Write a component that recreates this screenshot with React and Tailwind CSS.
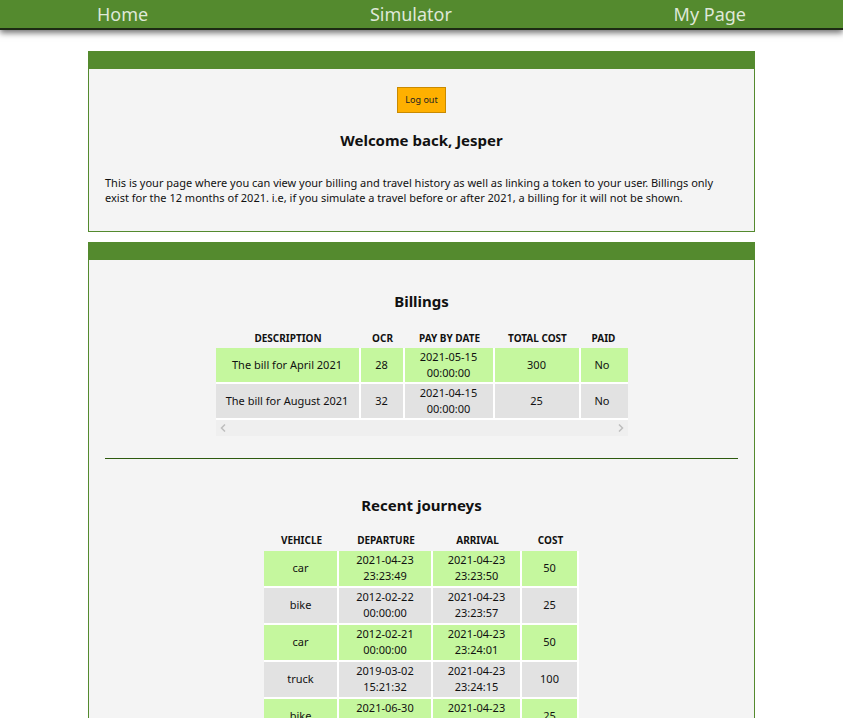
const billings = [
  { desc: "The bill for April 2021", ocr: "28", date: "2021-05-15", time: "00:00:00", cost: "300", paid: "No" },
  { desc: "The bill for August 2021", ocr: "32", date: "2021-04-15", time: "00:00:00", cost: "25", paid: "No" },
];

const journeys = [
  { vehicle: "car", dep: ["2021-04-23", "23:23:49"], arr: ["2021-04-23", "23:23:50"], cost: "50" },
  { vehicle: "bike", dep: ["2012-02-22", "00:00:00"], arr: ["2021-04-23", "23:23:57"], cost: "25" },
  { vehicle: "car", dep: ["2012-02-21", "00:00:00"], arr: ["2021-04-23", "23:24:01"], cost: "50" },
  { vehicle: "truck", dep: ["2019-03-02", "15:21:32"], arr: ["2021-04-23", "23:24:15"], cost: "100" },
  { vehicle: "bike", dep: ["2021-06-30", "00:00:00"], arr: ["2021-04-23", "23:24:20"], cost: "25" },
];

const cell = "border-r-2 border-b-2 border-white text-center align-middle leading-[16px]";

function Card({ children }) {
  return (
    <div className="border border-[#548a2e] bg-[#f4f4f4]">
      <div className="h-[17px] bg-[#548a2e]" />
      {children}
    </div>
  );
}

export default function App() {
  return (
    <div className="min-h-[718px] bg-white text-[#111] font-['Noto_Sans','Open_Sans',sans-serif]">
      <nav className="relative h-[30px] bg-[#548a2e] flex items-center justify-between px-[97px] text-[18px] leading-none text-[#dfe8d8] shadow-[0_3px_6px_rgba(0,0,0,0.55)] border-b-2 border-[#1d2a14]">
        <span>Home</span>
        <span>Simulator</span>
        <span>My Page</span>
      </nav>

      <main className="w-[667px] mx-auto pt-[21px] flex flex-col gap-[10px]">
        <Card>
          <div className="px-4 pt-[18px] pb-[26px] text-[11px]">
            <div className="flex justify-center">
              <button className="h-[26px] px-[7px] bg-[#ffb000] border border-[#c98a00] text-[9px] text-[#222]">
                Log out
              </button>
            </div>
            <h2 className="text-center text-[15px] font-bold mt-[16px]">Welcome back, Jesper</h2>
            <p className="mt-[23px] leading-[15px] text-[11px]">
              This is your page where you can view your billing and travel history as well as linking a token to your user. Billings only exist for the 12 months of 2021. i.e, if you simulate a travel before or after 2021, a billing for it will not be shown.
            </p>
          </div>
        </Card>

        <Card>
          <div className="px-4 pt-[30px] pb-[40px] text-[11px]">
            <h2 className="text-center text-[15px] font-bold">Billings</h2>
            <div className="mx-auto mt-[16px] w-[412px]">
              <div className="overflow-hidden">
                <table className="border-separate border-spacing-0 w-[460px] table-fixed">
                  <colgroup>
                    <col className="w-[145px]" />
                    <col className="w-[44px]" />
                    <col className="w-[90px]" />
                    <col className="w-[86px]" />
                    <col className="w-[95px]" />
                  </colgroup>
                  <thead>
                    <tr className="text-[10px] font-bold uppercase">
                      <th className="h-[20px] text-center">Description</th>
                      <th className="text-center">OCR</th>
                      <th className="text-center">Pay by date</th>
                      <th className="text-center">Total cost</th>
                      <th className="text-left pl-[11px]">Paid</th>
                    </tr>
                  </thead>
                  <tbody>
                    {billings.map((b, i) => (
                      <tr key={b.ocr} className={i % 2 === 0 ? "bg-[#c5f79e]" : "bg-[#e2e2e2]"}>
                        <td className={`${cell} h-[36px]`}>{b.desc}</td>
                        <td className={cell}>{b.ocr}</td>
                        <td className={cell}>{b.date}<br />{b.time}</td>
                        <td className={cell}>{b.cost}</td>
                        <td className={`${cell} text-left pl-[14px]`}>{b.paid}</td>
                      </tr>
                    ))}
                  </tbody>
                </table>
              </div>
              <div className="h-[16px] bg-[#efefef] flex items-center justify-between px-[4px] text-[#bdbdbd]">
                <svg width="6" height="8" viewBox="0 0 6 8"><path d="M5 0.5 L1.5 4 L5 7.5" fill="none" stroke="currentColor" strokeWidth="1.5" /></svg>
                <svg width="6" height="8" viewBox="0 0 6 8"><path d="M1 0.5 L4.5 4 L1 7.5" fill="none" stroke="currentColor" strokeWidth="1.5" /></svg>
              </div>
            </div>

            <hr className="mt-[22px] border-0 border-t border-[#2d5a0e]" />

            <h2 className="text-center text-[15px] font-bold mt-[35px]">Recent journeys</h2>
            <table className="mx-auto mt-[14px] border-separate border-spacing-0 table-fixed w-[315px]">
              <colgroup>
                <col className="w-[75px]" />
                <col className="w-[94px]" />
                <col className="w-[89px]" />
                <col className="w-[57px]" />
              </colgroup>
              <thead>
                <tr className="text-[10px] font-bold uppercase">
                  <th className="h-[20px] text-center">Vehicle</th>
                  <th className="text-center">Departure</th>
                  <th className="text-center">Arrival</th>
                  <th className="text-center">Cost</th>
                </tr>
              </thead>
              <tbody>
                {journeys.map((j, i) => (
                  <tr key={i} className={i % 2 === 0 ? "bg-[#c5f79e]" : "bg-[#e2e2e2]"}>
                    <td className={`${cell} h-[37px]`}>{j.vehicle}</td>
                    <td className={cell}>{j.dep[0]}<br />{j.dep[1]}</td>
                    <td className={cell}>{j.arr[0]}<br />{j.arr[1]}</td>
                    <td className={`${cell} border-r-0`}>{j.cost}</td>
                  </tr>
                ))}
              </tbody>
            </table>
          </div>
        </Card>
      </main>
    </div>
  );
}
